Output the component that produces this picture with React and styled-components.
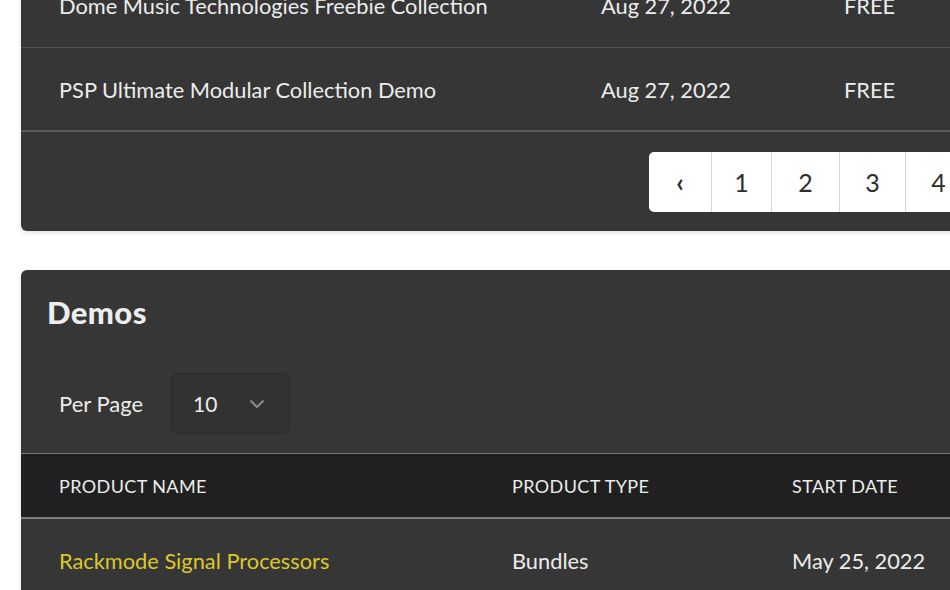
import React from 'react';
import styled, { createGlobalStyle } from 'styled-components';

const GlobalStyle = createGlobalStyle`
  html, body {
    margin: 0;
    padding: 0;
    background: #ffffff;
    overflow: hidden;
  }
  body {
    font-family: Lato, "Noto Sans", sans-serif;
  }
`;

const Page = styled.div`
  width: 1200px;
  padding-left: 21px;
  margin-top: -36px;
  display: flex;
  flex-direction: column;
  gap: 39px;
`;

const Card = styled.section`
  background: #363636;
  border-radius: 6px;
  box-shadow: 0 2px 4px rgba(0, 0, 0, 0.12);
  overflow: hidden;
  color: #ececec;
`;

const Row = styled.div`
  display: grid;
  grid-template-columns: ${(p) => p.$cols};
  align-items: center;
  height: ${(p) => p.$height || 84}px;
  padding-left: 38px;
  border-bottom: ${(p) => p.$border || '1px solid #545454'};
  box-sizing: border-box;
  font-size: 21.8px;
`;

const Cell = styled.div`
  white-space: nowrap;
  color: ${(p) => (p.$accent ? '#dcc82c' : '#ececec')};
`;

const Footer = styled.div`
  display: flex;
  padding: 20px 0 19px 628px;
`;

const Pager = styled.div`
  display: flex;
  background: #ffffff;
  border-radius: 5px 0 0 5px;
  height: 60px;
`;

const PageButton = styled.button`
  width: ${(p) => p.$w}px;
  height: 60px;
  border: none;
  border-left: ${(p) => (p.$first ? 'none' : '1px solid #d6d6d6')};
  background: transparent;
  color: #2e2e2e;
  font-family: inherit;
  font-size: ${(p) => (p.$arrow ? 26 : 25)}px;
  font-weight: ${(p) => (p.$arrow ? 700 : 400)};
  padding: 0;
  display: flex;
  align-items: center;
  justify-content: center;
  cursor: pointer;
`;

const Title = styled.h2`
  margin: 0;
  padding: 23px 0 0 26px;
  font-size: 31px;
  font-weight: 900;
  color: #ededed;
  letter-spacing: 0.4px;
`;

const Controls = styled.div`
  display: flex;
  align-items: center;
  gap: 28px;
  padding: 42px 0 19px 38px;
  font-size: 22px;
`;

const Select = styled.div`
  width: 119px;
  height: 61px;
  box-sizing: border-box;
  border: 1px solid #2a2a2a;
  border-radius: 8px;
  background: #323232;
  display: flex;
  align-items: center;
  justify-content: space-between;
  padding: 0 24px 0 21px;
  font-size: 21px;
`;

const HeadRow = styled(Row)`
  background: #202020;
  border-top: 1px solid #7a7a7a;
  border-bottom: 2px solid #7e7e7e;
  font-size: 18px;
  text-transform: uppercase;
  letter-spacing: 0.4px;
`;

const Chevron = () => (
  <svg width="16" height="10" viewBox="0 0 16 10" fill="none">
    <path d="M1.5 1.5 L8 8 L14.5 1.5" stroke="#8a8a8a" strokeWidth="2" />
  </svg>
);

const FREEBIE_COLS = '542px 243px 1fr';
const DEMO_COLS = '453px 280px 1fr';

const freebies = [
  { name: 'Dome Music Technologies Freebie Collection', date: 'Aug 27, 2022', price: 'FREE' },
  { name: 'PSP Ultimate Modular Collection Demo', date: 'Aug 27, 2022', price: 'FREE' }
];

const pages = [
  { label: '‹', w: 62, arrow: true },
  { label: '1', w: 60 },
  { label: '2', w: 68 },
  { label: '3', w: 66 },
  { label: '4', w: 66 },
  { label: '5', w: 66 }
];

export default function App() {
  return (
    <>
      <GlobalStyle />
      <Page>
        <Card>
          {freebies.map((item, i) => (
            <Row
              key={item.name}
              $cols={FREEBIE_COLS}
              $border={i === freebies.length - 1 ? '2px solid #5a5a5a' : undefined}
            >
              <Cell>{item.name}</Cell>
              <Cell>{item.date}</Cell>
              <Cell>{item.price}</Cell>
            </Row>
          ))}
          <Footer>
            <Pager>
              {pages.map((p, i) => (
                <PageButton key={p.label} $w={p.w} $arrow={p.arrow} $first={i === 0}>
                  {p.label}
                </PageButton>
              ))}
            </Pager>
          </Footer>
        </Card>

        <Card>
          <Title>Demos</Title>
          <Controls>
            <span>Per Page</span>
            <Select>
              <span>10</span>
              <Chevron />
            </Select>
          </Controls>
          <HeadRow $cols={DEMO_COLS} $height={66}>
            <Cell>Product Name</Cell>
            <Cell>Product Type</Cell>
            <Cell>Start Date</Cell>
          </HeadRow>
          <Row $cols={DEMO_COLS}>
            <Cell $accent>Rackmode Signal Processors</Cell>
            <Cell>Bundles</Cell>
            <Cell>May 25, 2022</Cell>
          </Row>
        </Card>
      </Page>
    </>
  );
}
